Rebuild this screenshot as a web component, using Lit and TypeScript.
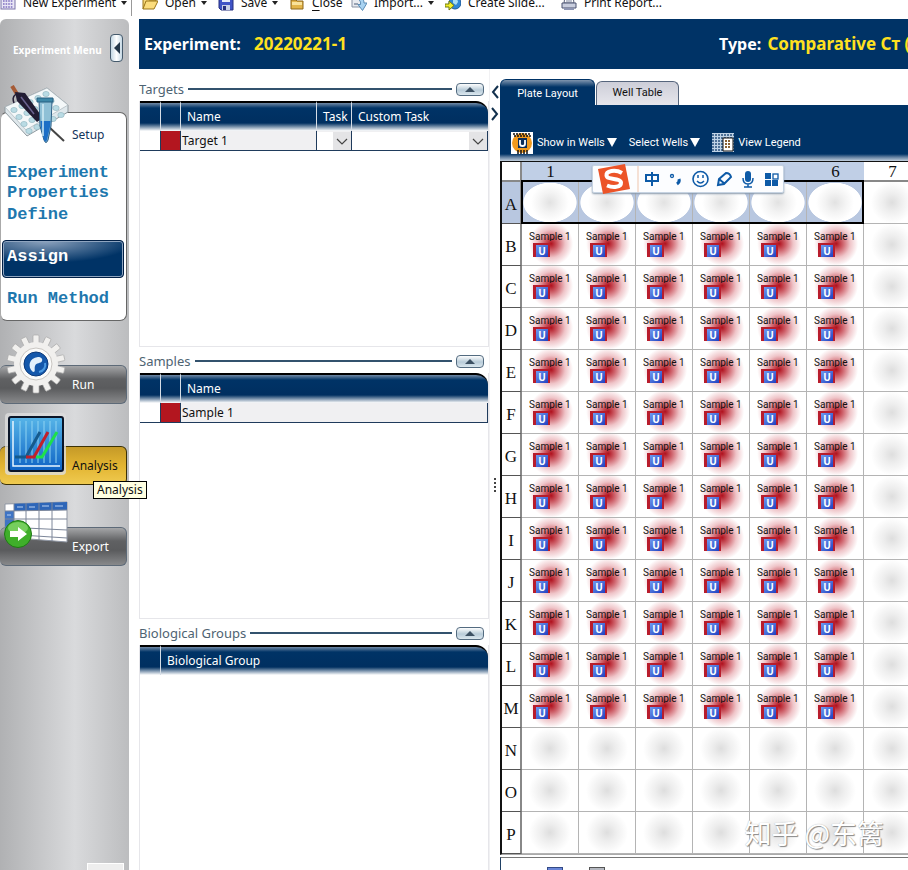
import { LitElement, html, svg, css, nothing } from "lit";
import { customElement, property, state } from "lit/decorators.js";
import { classMap } from "lit/directives/class-map.js";

const ROWS = "ABCDEFGHIJKLMNOP".split("");
const COLS = [1, 2, 3, 4, 5, 6, 7];

const icons = {
  plate: svg`<rect x="1" y="0" width="14" height="14" fill="#e9e6f5" stroke="#7b74a8"/><path d="M3 3h10M3 6h10M3 9h10M3 12h10" stroke="#7d6fc0" stroke-width="1.6" stroke-dasharray="1.6 1"/>`,
  open: svg`<path d="M1 14V3h5l1 2h7v3" fill="#f5d77a" stroke="#9a7416"/><path d="M1 14l3-8h12l-4 8z" fill="#fbdc7c" stroke="#9a7416"/>`,
  save: svg`<path d="M1 1h14v14H3l-2-2z" fill="#3f53c6" stroke="#27307f"/><rect x="4" y="1" width="8" height="6" fill="#e6ebfa"/><rect x="4" y="10" width="8" height="5" fill="#c9d0e6"/><rect x="5" y="11" width="3" height="4" fill="#27307f"/>`,
  close: svg`<path d="M2 5h5l1 1h6v8H2z" fill="#e3b54a" stroke="#8d661a"/><path d="M3 7h10v3H3z" fill="#f9e29a"/>`,
  import: svg`<path d="M1 1h9v11H1z" fill="#e8ebf0" stroke="#8791a3"/><path d="M3 9h4" stroke="#4c5a74"/><path d="M7 4c5-1 6 1 6 4h3l-4.500 7.500L7 9.500h2.500C10 7 9 5.500 7 4z" fill="#a9d3f1" stroke="#5b8cb5"/>`,
  slide: svg`<circle cx="10" cy="8" r="6" fill="#2f86d6" stroke="#1d5b9c"/><path d="M8 4c3-1 5 1 5 3l-2 3-3-2z" fill="#a7dcf2"/><path d="M0 9h4V6l5 4.500L4 15v-3H0z" fill="#f2ee2b" stroke="#6c7a12"/>`,
  print: svg`<path d="M4 1h8l1 7H3z" fill="#fff" stroke="#59607a"/><path d="M5 4h6M5 6h6" stroke="#7d86a0"/><path d="M1 8h14v5H1z" fill="#c9cede" stroke="#4a5270"/><path d="M3 13h10v2H3z" fill="#8e96b3"/>`,
};

@customElement("tool-button")
export class ToolButton extends LitElement {
  @property() label = "";
  @property() icon: keyof typeof icons = "plate";
  @property({ type: Boolean }) menu = false;
  @property({ type: Boolean }) underline = false;

  static styles = css`
    :host { display: block; }
    button { all: unset; display: flex; align-items: center; gap: 7px; height: 24px; font: 12px/24px "Noto Sans", sans-serif; color: #111; white-space: nowrap; }
    .arrow { border: 3px solid transparent; border-top: 4px solid #222; border-bottom: 0; margin-left: -2px; }
    .key { text-decoration: underline; text-underline-offset: 3px; }
  `;

  render() {
    return html`<button type="button">
      <svg width="16" height="16" viewBox="0 0 16 16" aria-hidden="true">${icons[this.icon]}</svg>
      <span>${this.underline ? html`<span class="key">${this.label[0]}</span>${this.label.slice(1)}` : this.label}</span>
      ${this.menu ? html`<span class="arrow"></span>` : nothing}
    </button>`;
  }
}

@customElement("list-section")
export class ListSection extends LitElement {
  @property() heading = "";

  static styles = css`
    :host { display: flex; flex-direction: column; height: 272px; }
    header { display: flex; align-items: center; gap: 4px; height: 24px; padding: 0 5px 0 0; }
    h2 { margin: 0; font: 13px/24px "Noto Sans", sans-serif; color: #4e6372; }
    .rule { flex: 1; height: 2px; background: #33526d; }
    button { all: unset; box-sizing: border-box; width: 28px; height: 13px; border: 1px solid #536b80; border-radius: 4px; background: linear-gradient(#fdfefe, #b8cbd8 55%, #dce8ef); display: grid; place-items: center; }
    .up { border: 5px solid transparent; border-bottom: 5px solid #3d5163; border-top: 0; }
    .box { height: 246px; box-sizing: border-box; border: 1px solid #e6e6ea; border-top: 0; }
  `;

  render() {
    return html`
      <header>
        <h2>${this.heading}</h2><span class="rule"></span>
        <button type="button" aria-label="Collapse ${this.heading}"><span class="up"></span></button>
      </header>
      <div class="box"><slot></slot></div>`;
  }
}

@customElement("plate-grid")
export class PlateGrid extends LitElement {
  static styles = css`
    :host { display: block; position: relative; overflow: hidden; }
    table { border-collapse: separate; border-spacing: 0; table-layout: fixed; width: 421px; border-left: 2px solid #111; border-bottom: 1px solid #aaa; }
    th { box-sizing: border-box; padding: 0; font: 17px/18px "Liberation Serif", serif; color: #111; background: #fff; text-align: center; }
    thead th { height: 20px; border-bottom: 2px solid #888; line-height: 16px; padding-top: 2px; }
    thead th.on { background: #c0cfe6; }
    .corner, tbody th { width: 20px; border-right: 2px solid #888; }
    tbody th { height: 42px; border-bottom: 1px solid #555; padding-top: 4px; }
    tbody th.on { background: #b8c7e0; }
    td { box-sizing: border-box; width: 57px; height: 42px; padding: 0; border-right: 1px solid #b4b4b4; border-bottom: 1px solid #b4b4b4; vertical-align: top; background: radial-gradient(circle at 50% 50%, #dedede, #eee 9px, #fff 21px); }
    td.picked { background: radial-gradient(circle, #e2e2e2, #f3f3f3 10px, transparent 19px), radial-gradient(27px 20px at 50% 50%, #fff 97%, #b8c7e0 100%); }
    td.filled { background: radial-gradient(circle at 52% 48%, #b0101c, #d0666f 7px, #efc4c8 14px, #fff 22px); }
    .name { display: block; height: 11px; margin: 6px 0 0 7px; overflow: hidden; font: 10px/13px "Roboto", sans-serif; color: #111; white-space: nowrap; }
    .badge { display: block; box-sizing: border-box; width: 17px; height: 14px; margin: 2px 0 0 11px; border: solid #b81c2c; border-width: 2px 2px 0 3px; background: linear-gradient(135deg, #6f9bf0, #1f3fc0); font: bold 10px/12px "Noto Sans", sans-serif; color: #fff; text-align: center; }
    .selection { position: absolute; left: 21px; top: 18px; width: 343px; height: 44px; box-sizing: border-box; border: 2px solid #000; }
  `;

  private well(row: number, col: number) {
    if (col < 7 && row > 0 && row < 13) {
      return html`<td class="filled"><span class="name">Sample 1</span><span class="badge">U</span></td>`;
    }
    return html`<td class=${classMap({ picked: row === 0 && col < 7 })}></td>`;
  }

  render() {
    return html`
      <table>
        <thead><tr><th class="corner"></th>${COLS.map((c) => html`<th scope="col" class=${classMap({ on: c < 7 })}>${c}</th>`)}</tr></thead>
        <tbody>${ROWS.map((r, i) => html`<tr><th scope="row" class=${classMap({ on: i === 0 })}>${r}</th>${COLS.map((c) => this.well(i, c))}</tr>`)}</tbody>
      </table>
      <div class="selection"></div>`;
  }
}

@customElement("app-root")
export class AppRoot extends LitElement {
  @state() private tab = "layout";

  static styles = css`
    :host { display: flex; flex-direction: column; position: relative; height: 100vh; overflow: hidden; background: #fff; font: 12px/16px "Noto Sans", sans-serif; color: #111; }
    button { font: inherit; }
    .toolbar { display: grid; grid-template-columns: 131px 87px 71px 62px 94px 116px 1fr; flex: none; height: 28px; margin-top: -9px; overflow: hidden; }
    .toolbar .sep { border-left: 1px solid #999; padding-left: 10px; height: 25px; }
    .shell { display: grid; grid-template-columns: 129px 1fr; grid-template-rows: minmax(0, 1fr); column-gap: 10px; flex: 1; min-height: 0; }

    .side { position: relative; border-radius: 6px 6px 0 0; background: linear-gradient(90deg, #b0b1b3, #d9dadc 58%, #bcbdbf); display: flex; flex-direction: column; }
    .side-top { display: flex; justify-content: space-between; align-items: center; height: 57px; padding: 0 6px 0 13px; }
    .side-top h1 { margin: 4px 0 0; font: bold 10px/16px "Noto Sans", sans-serif; color: #fff; white-space: nowrap; }
    .fold { box-sizing: border-box; width: 13px; height: 28px; padding: 0; border: 1px solid #455a6c; border-radius: 4px; background: linear-gradient(90deg, #c5d8e4, #fff 50%, #c5d8e4); display: grid; place-items: center; }
    .fold span { border: 6px solid transparent; border-right: 6px solid #24384a; border-left: 0; }
    .setup { position: relative; box-sizing: border-box; flex: none; width: 127px; height: 209px; margin-top: 36px; border: 1px solid #666; border-left-color: #aaa; border-radius: 7px; background: #fff; padding: 43px 2px 0 1px; }
    .setup h2 { position: absolute; left: 71px; top: 14px; margin: 0; font: 12px/16px "Noto Sans", sans-serif; color: #12345c; }
    .step { display: block; box-sizing: border-box; height: 42px; padding: 7px 0 0 5px; overflow: hidden; font: bold 17px/20px "Liberation Mono", monospace; color: #1e78ae; text-decoration: none; }
    .step.current { height: 38px; margin-bottom: 4px; padding: 6px 0 0 4px; border: 1px solid #001f45; border-radius: 4px; box-shadow: inset 0 0 0 1px #8fa5c0; background: radial-gradient(90px 22px at 35% 0, #8ea4bf, transparent), #003366; color: #fff; }
    .nav { position: relative; box-sizing: border-box; flex: none; width: 127px; height: 39px; margin: 44px 0 -2px; padding: 0 0 0 72px; border: 1px solid #5d6a78; border-left: 0; border-radius: 6px; background: linear-gradient(#a5a6a8, #606163 35%, #5a5b5d 60%, #88898b); color: #fff; text-align: left; font-size: 12px; }
    .nav.hot { border-color: #3d3205; background: linear-gradient(#c59a28, #e2b431 50%, #efca50); color: #111; }
    .pic { position: absolute; left: 0; bottom: 0; }
    .setup-pic { bottom: auto; top: -28px; }
    .run-pic { bottom: 9px; }
    .analysis-pic { bottom: 8px; }
    .export-pic { bottom: 16px; }
    .tip { position: absolute; left: 93px; top: 462px; z-index: 3; border: 1px solid #000; padding: 0 3px; background: #ffffe1; font-size: 12px; line-height: 16px; }
    .side-foot { position: absolute; left: 87px; bottom: 0; width: 37px; height: 7px; background: #eee; border: 1px solid #fff; border-bottom: 0; box-sizing: border-box; }

    .main { display: flex; flex-direction: column; min-width: 0; min-height: 0; }
    .banner { display: flex; flex: none; align-items: center; height: 50px; padding-left: 5px; background: #003366; color: #fff; font: bold 16px/24px "Noto Sans", sans-serif; white-space: nowrap; overflow: hidden; }
    .banner p { margin: 0; flex: 1; }
    .banner p.kind { flex: none; width: 189px; }
    .banner b { margin-left: 2px; color: #ffe11f; font-size: 17px; font-weight: bold; }
    .banner .id { margin-left: 9px; }
    .cols { display: grid; grid-template-columns: 350px 11px 1fr; grid-template-rows: minmax(0, 1fr); flex: 1; min-height: 0; }
    .lists { padding-top: 8px; overflow: hidden; }
    .list { width: 100%; border-collapse: separate; border-spacing: 0; table-layout: fixed; font-size: 12px; }
    .list th { height: 30px; padding: 0 0 0 6px; box-sizing: border-box; text-align: left; font-weight: normal; color: #fff; white-space: nowrap; overflow: hidden; border-top: 2px solid #000; border-right: 1px solid #d5dde6; background: linear-gradient(#7089a5, #003366 5px, #002f60 20px, #fff); }
    .list th:last-child { border-right: 0; border-top-right-radius: 12px; }
    .list td { box-sizing: border-box; height: 20px; padding: 0; border-bottom: 1px solid #1f3b5c; border-right: 1px solid #1f3b5c; background: #f0f0f2; line-height: 18px; }
    .list td.blank { background: #fff; }
    .list td.red { background: #b3161f; }
    .list .edge { width: 21px; }
    .list .tick { width: 20px; }
    .list .name { width: 136px; }
    .list .task { width: 35px; }
    .list td.text { padding-left: 1px; }
    .pick { position: relative; display: block; height: 18px; background: #fff; }
    .pick select { appearance: none; width: 100%; height: 100%; border: 0; background: none; padding: 0; font: inherit; }
    .pick svg { position: absolute; right: 0; top: 0; background: #e4e4e6; pointer-events: none; }
    .split { display: flex; flex-direction: column; align-items: center; border-left: 1px solid #f1f1f3; padding-top: 16px; gap: 8px; }
    .split svg { flex: none; }
    .grip { margin-top: 348px; }
    .work { display: flex; flex-direction: column; min-width: 0; min-height: 0; overflow: hidden; font-family: "Roboto", sans-serif; }
    .tabs { display: flex; align-items: flex-end; gap: 1px; height: 36px; flex: none; }
    .tabs button { box-sizing: border-box; width: 83px; height: 24px; border: 1px solid #56657c; border-bottom: 0; border-radius: 6px 6px 0 0; padding: 0 0 2px; background: linear-gradient(#cdced8, #e6e6ec); font-size: 11px; color: #111; }
    .tabs button.on { width: 95px; height: 26px; padding: 2px 0 0; border-color: #003366; background: linear-gradient(#8095ae, #003366 7px); color: #fff; }
    .actions { display: flex; flex: none; align-items: center; box-sizing: border-box; height: 57px; padding: 19px 0 0 11px; gap: 12px; background: linear-gradient(#003366 49px, #5f7d9e 52px, #c3d0dd 56px); border-bottom: 1px solid #111; }
    .actions button { display: flex; align-items: center; gap: 4px; border: 0; background: none; padding: 0; color: #fff; font-size: 11px; line-height: 16px; white-space: nowrap; }
    .down { border: 5px solid transparent; border-top: 9px solid #fff; border-bottom: 0; margin-left: -2px; }
    .plate { position: relative; flex: none; }
    .legend { display: flex; gap: 26px; margin-top: 2px; padding: 9px 0 0 46px; border-top: 1px solid #777; border-left: 1px solid #1f4064; flex: 1; }
    .legend i { flex: none; width: 16px; height: 16px; box-sizing: border-box; border: 1px solid #334a86; background: #6a86d8; }
    .legend i.grey { border-color: #555; background: #b5b8c0; }
    .ime { position: absolute; left: 92px; top: 3px; display: flex; align-items: center; box-sizing: border-box; width: 192px; height: 28px; background: #fcfdff; border: 1px solid #c6d3e2; box-shadow: 0 1px 2px #8899aa; border-radius: 2px; }
    .mark { position: absolute; right: 24px; bottom: 20px; font: 27px/34px "Noto Sans CJK SC", sans-serif; color: #fff; text-shadow: 1px 1px 1px #888, 0 0 1px #aaa; white-space: nowrap; }
  `;

  private combo(label: string) {
    return html`<label class="pick"><select aria-label=${label}><option></option></select>
      <svg width="18" height="18" viewBox="0 0 18 18"><path d="M4 7l5 5 5-5" fill="none" stroke="#444" stroke-width="1.200"/></svg></label>`;
  }

  private setupPic() {
    const dots = [];
    for (let r = 0; r < 4; r++) for (let c = 0; c < 5; c++) dots.push(svg`<ellipse cx=${13 + c * 8 + r * 5} cy=${25 - c * 4 + r * 7} rx="3.200" ry="2.600" fill="#b9dbe4" stroke="#8fb3be" stroke-width=".6"/>`);
    return html`<svg class="pic setup-pic" width="70" height="66" viewBox="0 0 70 66" aria-hidden="true">
      <path d="M4 22L46 3l21 17v7L26 51 4 27z" fill="#dfe8ec" stroke="#8f9aa0"/><path d="M4 22L46 3l21 17-42 25z" fill="#f4f8f9" stroke="#aab4ba" stroke-width=".7"/>${dots}
      <path d="M11 1l5 8" stroke="#a65b36" stroke-width="4"/><path d="M14 7l10 1 18 25-6 4L16 16z" fill="#221c33"/><path d="M20 12l13 17" stroke="#6b6390" stroke-width="1.500"/><path d="M15 9c-4 3-3 6-2 9" fill="none" stroke="#221c33" stroke-width="1.500"/><path d="M48 42l15 14" stroke="#444" stroke-width="2"/>
      <path d="M38 16h13l-1 25-3 14q-2 5-4 0l-4-14z" fill="#8fc0d6" stroke="#2c5f86"/><path d="M39.500 36h10l-.5 6-3 13q-1.500 3-3 0l-3-13z" fill="#1d6fc6"/><path d="M36 13h16v4H36z" fill="#3d88a8" stroke="#265f80"/><path d="M42 19v32" stroke="#d3ecf5" stroke-width="1.500"/>
    </svg>`;
  }

  private runPic() {
    const teeth = Array.from({ length: 14 }, (_, i) => svg`<rect x="27" y="1" width="6" height="10" rx="1" transform="rotate(${(i * 360) / 14} 30 30)"/>`);
    return html`<svg class="pic run-pic" width="66" height="60" viewBox="-6 0 66 60" aria-hidden="true">
      <g fill="#f1f0ee" stroke="#aaa" stroke-width=".7">${teeth}</g><circle cx="30" cy="30" r="22" fill="#f1f0ee"/><circle cx="30" cy="30" r="16" fill="#fbfbfa" stroke="#c9c6c2"/>
      <circle cx="30" cy="30" r="12" fill="#1558ab" stroke="#0d3a7a"/><path d="M27 38c-6-5-4-14 5-15 3 0 5 2 4 4-1 3-6 1-7 5-1 3 1 6-2 6z" fill="#e3f0fb"/><path d="M33 38c5-1 7-5 6-9" fill="none" stroke="#4c9be2" stroke-width="2"/>
    </svg>`;
  }

  private analysisPic() {
    return html`<svg class="pic analysis-pic" width="66" height="64" viewBox="0 0 66 64" aria-hidden="true">
      <defs><linearGradient id="sky" x2="0" y2="1"><stop stop-color="#57b5e8"/><stop offset="1" stop-color="#0d62c4"/></linearGradient></defs>
      <rect x="5" y="1" width="61" height="62" rx="4" fill="#ddd" opacity=".8"/><rect x="9" y="5" width="54" height="54" rx="2" fill="url(#sky)" stroke="#0a1427" stroke-width="2"/>
      <path d="M20 9v42M26 9v42M32 9v42M38 9v42M44 9v42M50 9v42M56 9v42" stroke="#8fd3f2"/><path d="M13 9v45h47" fill="none" stroke="#e8f6ff" stroke-width="1.500"/>
      <path d="M15 45h11l14-25" fill="none" stroke="#155a8c" stroke-width="3"/><path d="M26 45h8l14-25" fill="none" stroke="#c1202b" stroke-width="3"/><path d="M36 45h6l15-25" fill="none" stroke="#1ee04a" stroke-width="3"/>
    </svg>`;
  }

  private exportPic() {
    return html`<svg class="pic export-pic" width="70" height="50" viewBox="0 0 70 50" aria-hidden="true">
      <path d="M5 5l62-2v40L5 38z" fill="#fff" stroke="#8f96a3"/><path d="M14 4.700L67 3v8l-53 1z" fill="#2e66b8"/><path d="M5 12h9v26H5z" fill="#3f74c4"/><path d="M5 12l62-1M5 20l62 0M5 28l62 3M5 35l62 4M14 5v34M26 4v36M39 4v37M52 3v39" stroke="#7c8699" fill="none"/><path d="M17 8h6M29 8h6M42 7h7M55 7h8M7 16h4" stroke="#bcd3f3"/>
      <circle cx="18" cy="35" r="13.500" fill="#3fae2a" stroke="#1e7a14"/><ellipse cx="18" cy="29" rx="10" ry="6" fill="#8fdd73" opacity=".7"/><path d="M10 32h8v-4l9 7-9 7v-4h-8z" fill="#fff"/>
    </svg>`;
  }

  private imeBar() {
    return html`<div class="ime"><svg width="190" height="32" viewBox="0 0 190 32" aria-label="Input method">
      <path d="M5 6L32 1l5 25-27 5z" fill="#ec5428"/><path d="M29 10C22 6 13 8 13.500 12.500c.5 5 14 2 14.500 7 .3 5-8 5.500-14 3" fill="none" stroke="#fff" stroke-width="4"/>
      <path d="M45 3v26" stroke="#efc5ad"/>
      <g fill="none" stroke="#0d5aa7" stroke-width="2"><path d="M53 12h12v6H53zM59 9v14"/><circle cx="79" cy="13" r="1.500" stroke-width="1.300"/><path d="M86 16q1 3-2 5" stroke-width="3"/>
      <circle cx="107.500" cy="16" r="7.500" stroke-width="1.600"/><path d="M104 18q3.500 4 7 0" stroke-width="1.400"/><path d="M105 12v3M110 12v3" stroke-width="1.500"/>
      <path d="M125 22l1-6 7-6q4 0 5 4l-7 7zM126 16l6 5" stroke-width="2"/><path d="M150 15q0 6 5 6t5-6M155 21v3M151 24h8" stroke-width="1.500"/></g>
      <rect x="152" y="8" width="6" height="11" rx="3" fill="#0d5aa7"/>
      <path d="M172 10h6v6h-6zM172 17h6v6h-6zM179 17h6v6h-6z" fill="#0d5aa7"/><rect x="180" y="11" width="5" height="5" fill="none" stroke="#0d5aa7" stroke-width="1.300"/>
    </svg></div>`;
  }

  render() {
    return html`
      <nav class="toolbar" aria-label="Main">
        <tool-button label="New Experiment" icon="plate" menu></tool-button>
        <tool-button class="sep" label="Open" icon="open" menu></tool-button>
        <tool-button label="Save" icon="save" menu></tool-button>
        <tool-button label="Close" icon="close" underline></tool-button>
        <tool-button label="Import..." icon="import" menu></tool-button>
        <tool-button label="Create Slide..." icon="slide"></tool-button>
        <tool-button label="Print Report..." icon="print"></tool-button>
      </nav>
      <div class="shell">
        <aside class="side">
          <div class="side-top"><h1>Experiment Menu</h1><button class="fold" aria-label="Collapse menu"><span></span></button></div>
          <section class="setup">
            ${this.setupPic()}
            <h2>Setup</h2>
            <a class="step" href="#properties">Experiment Properties</a>
            <a class="step" href="#define">Define</a>
            <a class="step current" href="#assign">Assign</a>
            <a class="step" href="#run-method">Run Method</a>
          </section>
          <button class="nav">${this.runPic()}Run</button>
          <button class="nav hot">${this.analysisPic()}Analysis</button>
          <button class="nav">${this.exportPic()}Export</button>
          <span class="tip" role="tooltip">Analysis</span>
          <span class="side-foot"></span>
        </aside>
        <main class="main">
          <header class="banner"><p>Experiment: <b class="id">20220221-1</b></p><p class="kind">Type: <b>Comparative Cт (</b></p></header>
          <div class="cols">
            <div class="lists">
              <list-section heading="Targets">
                <table class="list">
                  <thead><tr><th class="edge"></th><th class="tick"></th><th class="name">Name</th><th class="task">Task</th><th>Custom Task</th></tr></thead>
                  <tbody><tr><td class="blank"></td><td class="red"></td><td class="text">Target 1</td><td>${this.combo("Task")}</td><td>${this.combo("Custom Task")}</td></tr></tbody>
                </table>
              </list-section>
              <list-section heading="Samples">
                <table class="list">
                  <thead><tr><th class="edge"></th><th class="tick"></th><th>Name</th></tr></thead>
                  <tbody><tr><td class="blank"></td><td class="red"></td><td class="text">Sample 1</td></tr></tbody>
                </table>
              </list-section>
              <list-section heading="Biological Groups">
                <table class="list"><thead><tr><th class="edge"></th><th>Biological Group</th></tr></thead></table>
              </list-section>
            </div>
            <div class="split">
              <svg width="10" height="14" viewBox="0 0 10 14"><path d="M8 1L3 7l5 6" fill="none" stroke="#12304d" stroke-width="2"/></svg>
              <svg width="10" height="14" viewBox="0 0 10 14"><path d="M2 1l5 6-5 6" fill="none" stroke="#12304d" stroke-width="2"/></svg>
              <svg class="grip" width="4" height="16" viewBox="0 0 4 16"><path d="M1 1h2v2H1zM1 5h2v2H1zM1 9h2v2H1zM1 13h2v2H1z" fill="#444"/></svg>
            </div>
            <section class="work">
              <div class="tabs" role="tablist">
                <button role="tab" class=${classMap({ on: this.tab === "layout" })} @click=${() => (this.tab = "layout")}>Plate Layout</button>
                <button role="tab" class=${classMap({ on: this.tab === "table" })} @click=${() => (this.tab = "table")}>Well Table</button>
              </div>
              <div class="actions">
                <button><svg width="22" height="22" viewBox="0 0 22 22"><path d="M0 0h22v22H0z" fill="#fff"/><circle cx="11" cy="11" r="10" fill="#f29a1d"/><path d="M2 2h18M3 4h17M6 19h11M6 21h11" stroke="#111" stroke-width="1.500" stroke-dasharray="2 1"/><path d="M7 6h9v10H7z" fill="#0c2d57"/><path d="M9 8v4q0 2 2.500 2t2.500-2V8" fill="none" stroke="#fff" stroke-width="1.800"/></svg>Show in Wells<span class="down"></span></button>
                <button>Select Wells<span class="down"></span></button>
                <button><svg width="22" height="19" viewBox="0 0 22 19"><path d="M0 0h22v19H0z" fill="#bfd3e6"/><path d="M0 2h22M0 5h22M0 8h22M0 11h22M0 14h22M0 17h22" stroke="#28517d" stroke-width="1.500" stroke-dasharray="2 1"/><path d="M11 5h10v13H11z" fill="#fff" stroke="#111"/><path d="M13 8h6M13 11h6M13 14h6" stroke="#8a6233" stroke-width="1.800" stroke-dasharray="2 1"/></svg>View Legend</button>
              </div>
              <div class="plate"><plate-grid></plate-grid>${this.imeBar()}</div>
              <div class="legend"><i></i><i class="grey"></i></div>
            </section>
          </div>
        </main>
      </div>
      <div class="mark">知乎 @东篱</div>`;
  }
}
